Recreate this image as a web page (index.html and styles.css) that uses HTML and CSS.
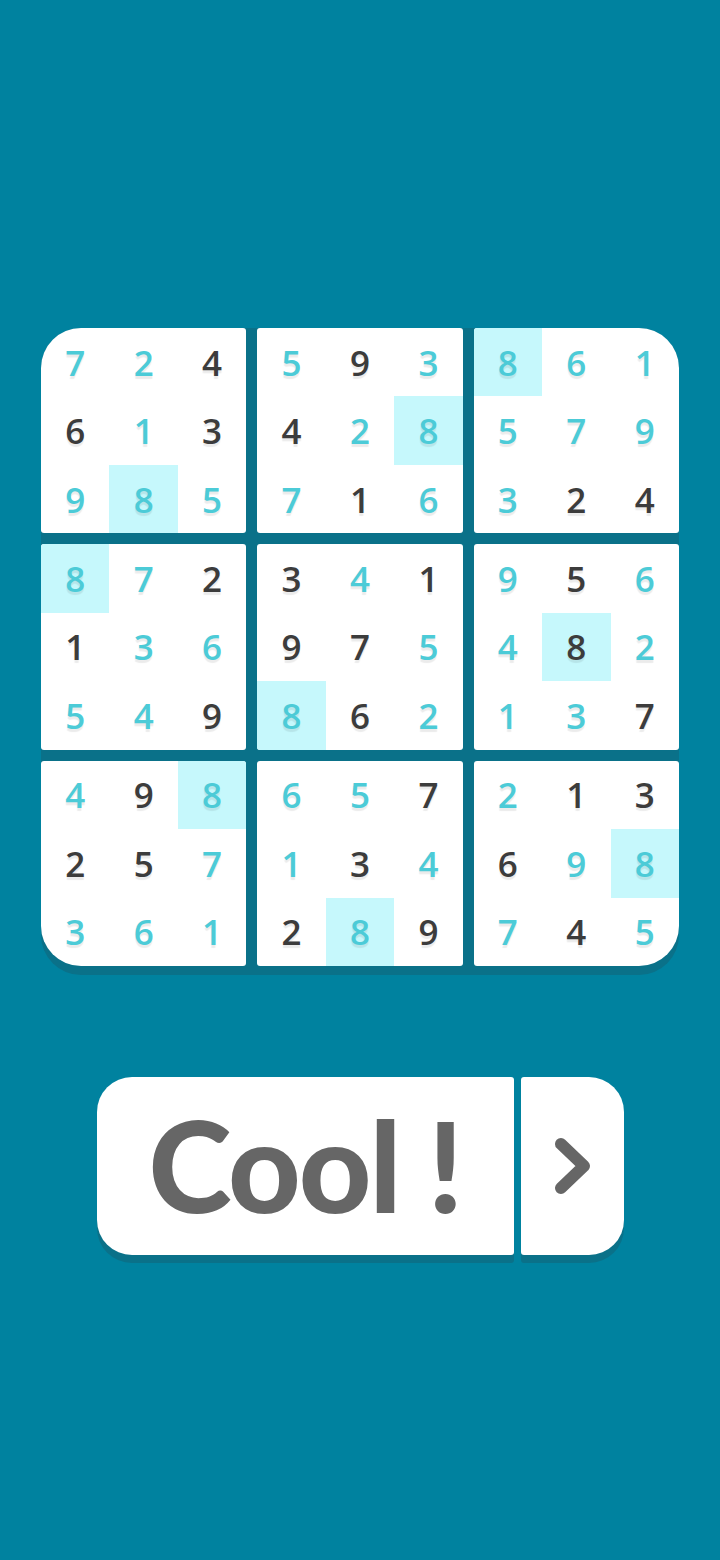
FILE: index.html
```html
<!DOCTYPE html>
<html lang="en">
<head>
    <meta charset="UTF-8">
    <meta name="viewport" content="width=device-width, initial-scale=1.0">
    <title>Sudoku - Solved</title>
    <link rel="stylesheet" href="styles.css">
</head>
<body>
    <div class="page">
        <div class="board">
            <div class="block">
                <span class="cell given">7</span><span class="cell given">2</span><span class="cell">4</span>
                <span class="cell">6</span><span class="cell given">1</span><span class="cell">3</span>
                <span class="cell given">9</span><span class="cell given hl">8</span><span class="cell given">5</span>
            </div>
            <div class="block">
                <span class="cell given">5</span><span class="cell">9</span><span class="cell given">3</span>
                <span class="cell">4</span><span class="cell given">2</span><span class="cell given hl">8</span>
                <span class="cell given">7</span><span class="cell">1</span><span class="cell given">6</span>
            </div>
            <div class="block">
                <span class="cell given hl">8</span><span class="cell given">6</span><span class="cell given">1</span>
                <span class="cell given">5</span><span class="cell given">7</span><span class="cell given">9</span>
                <span class="cell given">3</span><span class="cell">2</span><span class="cell">4</span>
            </div>

            <div class="block">
                <span class="cell given hl">8</span><span class="cell given">7</span><span class="cell">2</span>
                <span class="cell">1</span><span class="cell given">3</span><span class="cell given">6</span>
                <span class="cell given">5</span><span class="cell given">4</span><span class="cell">9</span>
            </div>
            <div class="block">
                <span class="cell">3</span><span class="cell given">4</span><span class="cell">1</span>
                <span class="cell">9</span><span class="cell">7</span><span class="cell given">5</span>
                <span class="cell given hl">8</span><span class="cell">6</span><span class="cell given">2</span>
            </div>
            <div class="block">
                <span class="cell given">9</span><span class="cell">5</span><span class="cell given">6</span>
                <span class="cell given">4</span><span class="cell hl">8</span><span class="cell given">2</span>
                <span class="cell given">1</span><span class="cell given">3</span><span class="cell">7</span>
            </div>

            <div class="block">
                <span class="cell given">4</span><span class="cell">9</span><span class="cell given hl">8</span>
                <span class="cell">2</span><span class="cell">5</span><span class="cell given">7</span>
                <span class="cell given">3</span><span class="cell given">6</span><span class="cell given">1</span>
            </div>
            <div class="block">
                <span class="cell given">6</span><span class="cell given">5</span><span class="cell">7</span>
                <span class="cell given">1</span><span class="cell">3</span><span class="cell given">4</span>
                <span class="cell">2</span><span class="cell given hl">8</span><span class="cell">9</span>
            </div>
            <div class="block">
                <span class="cell given">2</span><span class="cell">1</span><span class="cell">3</span>
                <span class="cell">6</span><span class="cell given">9</span><span class="cell given hl">8</span>
                <span class="cell given">7</span><span class="cell">4</span><span class="cell given">5</span>
            </div>
        </div>

        <div class="actions">
            <button class="btn btn-cool">Cool !</button>
            <button class="btn btn-next" aria-label="Next">
                <svg width="40" height="60" viewBox="0 0 40 60">
                    <path d="M9 8 L32 30 L9 52" fill="none" stroke="#666" stroke-width="12" stroke-linecap="round" stroke-linejoin="round"/>
                </svg>
            </button>
        </div>
    </div>
</body>
</html>
```

FILE: styles.css
```css
* {
    margin: 0;
    padding: 0;
    box-sizing: border-box;
}

body {
    background-color: #00829f;
    font-family: 'Open Sans', 'Noto Sans', sans-serif;
    min-height: 1560px;
}

.page {
    padding-top: 328px;
}

.board {
    width: 638px;
    height: 638px;
    margin: 0 auto;
    display: grid;
    grid-template-columns: repeat(3, 1fr);
    grid-template-rows: repeat(3, 1fr);
    gap: 11px;
    background-color: #0a7189;
    border-radius: 40px;
    overflow: hidden;
    box-shadow: 0 9px 0 #0a7189;
}

.block {
    background-color: #fff;
    border-radius: 3px;
    display: grid;
    grid-template-columns: repeat(3, 1fr);
    grid-template-rows: repeat(3, 1fr);
    overflow: hidden;
}

.cell {
    display: flex;
    align-items: center;
    justify-content: center;
    font-size: 35px;
    font-weight: 600;
    color: #3c3c3c;
    text-shadow: 0 3px 1px rgba(0, 0, 0, 0.08);
}

.cell.given {
    color: #4ccbd7;
}

.cell.hl {
    background-color: #c6f8fc;
}

.actions {
    display: flex;
    justify-content: center;
    gap: 7px;
    margin-top: 111px;
}

.btn {
    border: none;
    background-color: #fff;
    height: 178px;
    color: #666;
    cursor: pointer;
    box-shadow: 0 8px 0 #0a7189;
    display: flex;
    align-items: center;
    justify-content: center;
}

.btn-cool {
    width: 417px;
    border-radius: 35px 3px 3px 35px;
    font-family: 'Lato', 'Open Sans', sans-serif;
    font-weight: 900;
    font-size: 126px;
    letter-spacing: -2px;
    padding-bottom: 4px;
}

.btn-next {
    width: 103px;
    border-radius: 3px 35px 35px 3px;
}
```
